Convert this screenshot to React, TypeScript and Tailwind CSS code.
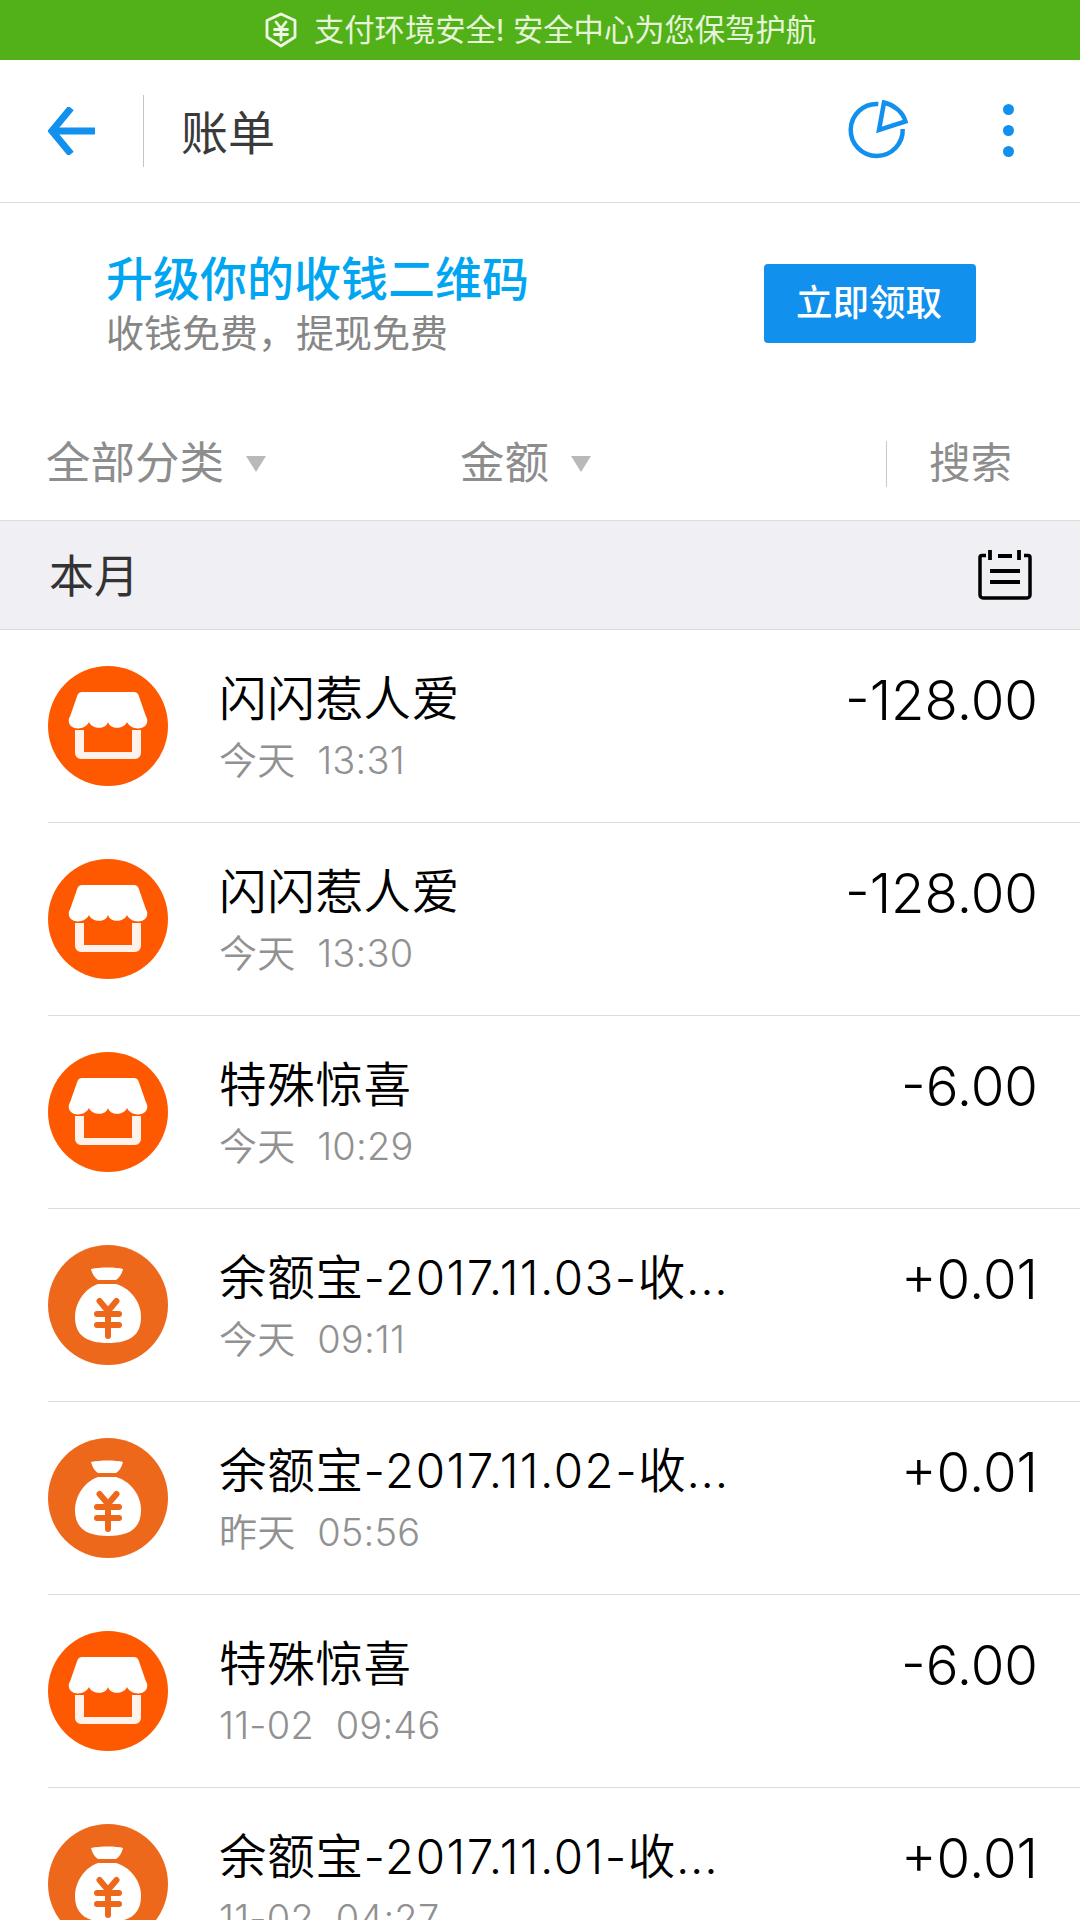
const font = "font-['Inter','Noto_Sans_CJK_SC',sans-serif]";

function Shop() {
  return (
    <svg viewBox="0 0 120 120" className="w-[120px] h-[120px] shrink-0">
      <circle cx="60" cy="60" r="60" fill="#fe5900" />
      <path d="M34 26H86a5 5 0 0 1 4.500 3L98 50.500a7.500 7.500 0 0 1-4.500 11.500c-6 1.500-12-1-14.500-6-2.500 6.500-16 9-19 0-3 9-16.500 6.500-19 0-2.500 5-8.500 7.500-14.500 6A7.500 7.500 0 0 1 22 50.500L29.500 29a5 5 0 0 1 4.500-3Z" fill="#fff" />
      <path d="M27 64H36V86H84V64H93V87a6 6 0 0 1-6 6H33a6 6 0 0 1-6-6Z" fill="#fff" fillOpacity="0.92" />
    </svg>
  );
}

function Bag() {
  return (
    <svg viewBox="0 0 120 120" className="w-[120px] h-[120px] shrink-0">
      <circle cx="60" cy="60" r="60" fill="#ee681c" />
      <path d="M43 24C52 22 68 22 75 24C74 29 71 33 68 35H50C47 33 44 29 43 24Z" fill="#fff" />
      <path d="M50 39H68C84 44 93 58 93 72C93 90 82 98 60 98C38 98 27 90 27 72C27 58 36 44 50 39Z" fill="#fff" />
      <g stroke="#ee681c" strokeWidth="6" strokeLinecap="round" fill="none">
        <path d="M51.500 56L60 66L68.500 56" />
        <path d="M49 69H71" />
        <path d="M49 80H71" />
        <path d="M60 66V91" />
      </g>
    </svg>
  );
}

type Row = { t: string; d?: string; e?: string; s: string; a: string; k: "shop" | "bag" };
const rows: Row[] = [
  { t: "闪闪惹人爱", s: "今天  13:31", a: "-128.00", k: "shop" },
  { t: "闪闪惹人爱", s: "今天  13:30", a: "-128.00", k: "shop" },
  { t: "特殊惊喜", s: "今天  10:29", a: "-6.00", k: "shop" },
  { t: "余额宝", d: "-2017.11.03-", e: "收...", s: "今天  09:11", a: "+0.01", k: "bag" },
  { t: "余额宝", d: "-2017.11.02-", e: "收...", s: "昨天  05:56", a: "+0.01", k: "bag" },
  { t: "特殊惊喜", s: "11-02  09:46", a: "-6.00", k: "shop" },
  { t: "余额宝", d: "-2017.11.01-", e: "收...", s: "11-02  04:27", a: "+0.01", k: "bag" },
];

export default function App() {
  return (
    <div className={`w-[1080px] h-[1920px] overflow-hidden bg-white ${font}`}>
      <div className="h-[60px] bg-[#52b019] flex items-center justify-center">
        <svg viewBox="0 0 34 36" className="w-[34px] h-[36px] mr-[16px]">
          <path d="M17 2L31 8.500V25L17 34L3 25V8.500Z" fill="none" stroke="#eef8e6" strokeWidth="2.800" strokeLinejoin="round" />
          <path d="M12 10L17 16.500L22 10M10.500 17.500H23.500M10.500 22.500H23.500M17 16.500V28" fill="none" stroke="#eef8e6" strokeWidth="2.800" strokeLinecap="round" />
        </svg>
        <span className="text-[30.300px] leading-[60px] text-[#e6f4da] whitespace-pre">支付环境安全! 安全中心为您保驾护航</span>
      </div>

      <div className="h-[143px] border-b border-[#dcdcdc] flex items-center">
        <svg viewBox="0 0 48 48" className="w-[48px] h-[48px] ml-[48px] shrink-0">
          <path d="M23 1L4 24L23 47" fill="none" stroke="#1290ee" strokeWidth="7" />
          <path d="M4 24H47" stroke="#1290ee" strokeWidth="7" />
        </svg>
        <div className="w-px h-[72px] bg-[#c4c4c4] ml-[47px]" />
        <div className="ml-[37px] pt-[2px] text-[47px] leading-none text-[#3a3a3a]">账单</div>
        <div className="ml-auto mr-[66px] flex items-center gap-[95px] -mt-[2px]">
          <svg viewBox="0 0 60 60" className="w-[60px] h-[60px]">
            <path d="M30.300 4A26 26 0 1 0 54.700 29" fill="none" stroke="#1290ee" strokeWidth="4.500" />
            <path d="M36 2.500C46 5 55 12 57.500 21.500L31 30Z" fill="none" stroke="#1290ee" strokeWidth="4.500" />
          </svg>
          <div className="flex flex-col gap-[10px]">
            <div className="w-[11px] h-[11px] rounded-full bg-[#1290ee]" />
            <div className="w-[11px] h-[11px] rounded-full bg-[#1290ee]" />
            <div className="w-[11px] h-[11px] rounded-full bg-[#1290ee]" />
          </div>
        </div>
      </div>

      <div className="h-[172px] flex items-start pl-[106px] pr-[104px]">
        <div className="pt-[49px]">
          <div className="text-[47px] leading-[54px] font-medium text-[#00a6f2]">升级你的收钱二维码</div>
          <div className="text-[38px] leading-[50px] mt-[2px] text-[#868686]">收钱免费，提现免费</div>
        </div>
        <div className="ml-auto mt-[61px] w-[212px] h-[79px] bg-[#1290ee] rounded-[4px] flex items-center justify-center text-white text-[36.500px] font-medium pr-[2px]">立即领取</div>
      </div>

      <div className="h-[145px] flex items-center pt-[32px] text-[#8d8d8d]">
        <div className="ml-[46px] text-[44.500px] leading-none">全部分类</div>
        <div className="ml-[22px] w-0 h-0 border-x-[10.500px] border-x-transparent border-t-[16px] border-t-[#b9b9b9]" />
        <div className="ml-[194px] text-[44.500px] leading-none">金额</div>
        <div className="ml-[22px] w-0 h-0 border-x-[10.500px] border-x-transparent border-t-[16px] border-t-[#b9b9b9]" />
        <div className="ml-[295px] w-px h-[46px] bg-[#c8c8c8]" />
        <div className="ml-[42px] text-[41.500px] leading-none">搜索</div>
      </div>

      <div className="h-[110px] bg-[#efeff4] border-y border-[#dcdcdc] flex items-center pl-[49px] pr-[48px]">
        <div className="pt-[3px] text-[45px] leading-none text-[#333]">本月</div>
        <svg viewBox="0 0 54 50" className="ml-auto w-[54px] h-[50px]">
          <path d="M8 5.500H4a2 2 0 0 0-2 2V45a3 3 0 0 0 3 3H49a3 3 0 0 0 3-3V7.500a2 2 0 0 0-2-2H46" fill="none" stroke="#000" strokeWidth="3.500" />
          <path d="M12 0V10M41 0V10M20 6H34M12 21H42M12 32H42" fill="none" stroke="#000" strokeWidth="3.800" />
        </svg>
      </div>

      {rows.map((r, i) => (
        <div key={i} className="h-[193px] ml-[48px] border-b border-[#dcdcdc] flex items-center pr-[42px]">
          {r.k === "shop" ? <Shop /> : <Bag />}
          <div className="ml-[51px] flex-1 min-w-0 pt-[2px]">
            <div className="text-[47.500px] leading-[56px] tracking-[0.700px] font-[350] text-black whitespace-pre">
              {r.t}
              {r.d ? <span className="tracking-[1.500px]">{r.d}</span> : null}
              {r.e}
            </div>
            <div className="mt-[10px] text-[38px] leading-[46px] tracking-[0.200px] font-[350] text-[#919191] whitespace-pre">{r.s}</div>
          </div>
          <div className="self-start mt-[38px] text-[54.500px] leading-[64px] font-[350] text-black">{r.a}</div>
        </div>
      ))}
    </div>
  );
}
